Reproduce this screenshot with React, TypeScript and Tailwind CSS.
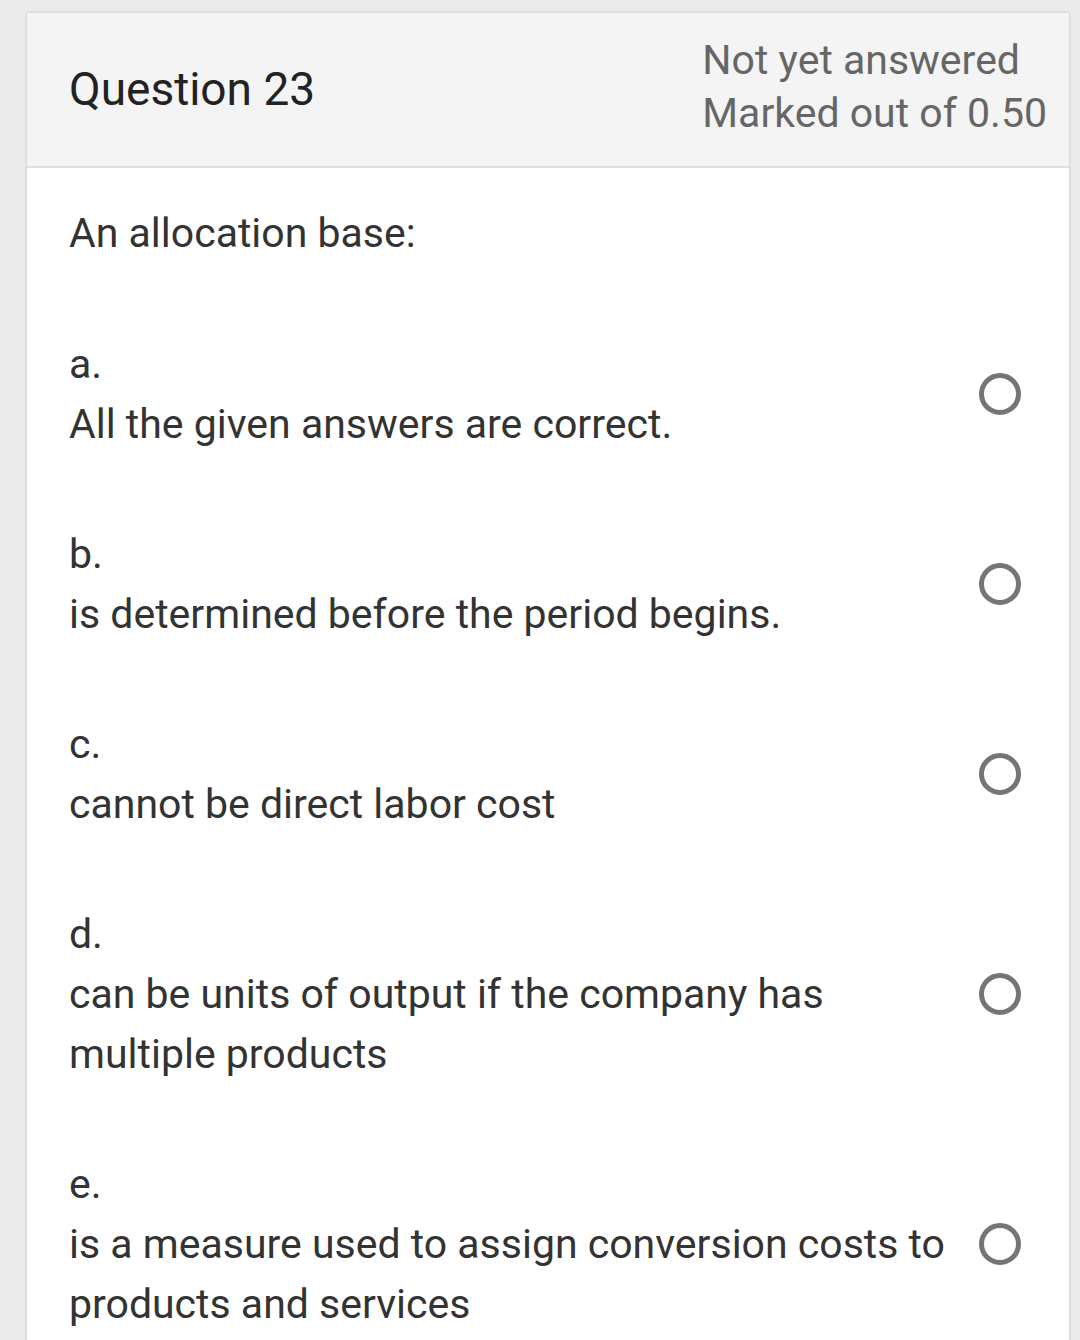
const options = [
  { letter: "a.", text: "All the given answers are correct." },
  { letter: "b.", text: "is determined before the period begins." },
  { letter: "c.", text: "cannot be direct labor cost" },
  { letter: "d.", text: "can be units of output if the company has multiple products" },
  { letter: "e.", text: "is a measure used to assign conversion costs to products and services" },
];

function Radio() {
  return (
    <span className="block w-[42px] h-[42px] shrink-0 rounded-full border-[5px] border-[#757575] bg-white" />
  );
}

export default function App() {
  return (
    <div
      className="h-[1340px] overflow-hidden bg-[#ebebeb] pt-[12px] pl-[26px] pr-[10px]"
      style={{ fontFamily: "Roboto, 'Noto Sans', sans-serif" }}
    >
      <div className="bg-white border border-[#dcdcdc] rounded-[3px] shadow-[0_0_2px_rgba(0,0,0,0.12)]">
        {/* header */}
        <div className="h-[155px] bg-[#f4f4f4] border-b-2 border-[#e0e0e0] flex items-center justify-between pl-[42px] pr-[22px]">
          <div className="text-[46px] text-[#222222] leading-none -mt-[2px]">Question 23</div>
          <div className="text-[41px] leading-[53px] text-[#666666] -mt-[5px]">
            <div>Not yet answered</div>
            <div>Marked out of 0.50</div>
          </div>
        </div>

        {/* body */}
        <div className="pl-[42px] pr-[48px] pt-[35px]">
          <div className="text-[41px] leading-[60px] text-[#333333]">An allocation base:</div>
          <div className="flex flex-col gap-[70px] mt-[71px] pb-[20px]">
            {options.map((o) => (
              <div key={o.letter} className="flex items-center">
                <div className="w-[880px] text-[41px] leading-[60px] text-[#333333]">
                  <div>{o.letter}</div>
                  <div>{o.text}</div>
                </div>
                <div className="ml-auto">
                  <Radio />
                </div>
              </div>
            ))}
          </div>
        </div>
      </div>
    </div>
  );
}
